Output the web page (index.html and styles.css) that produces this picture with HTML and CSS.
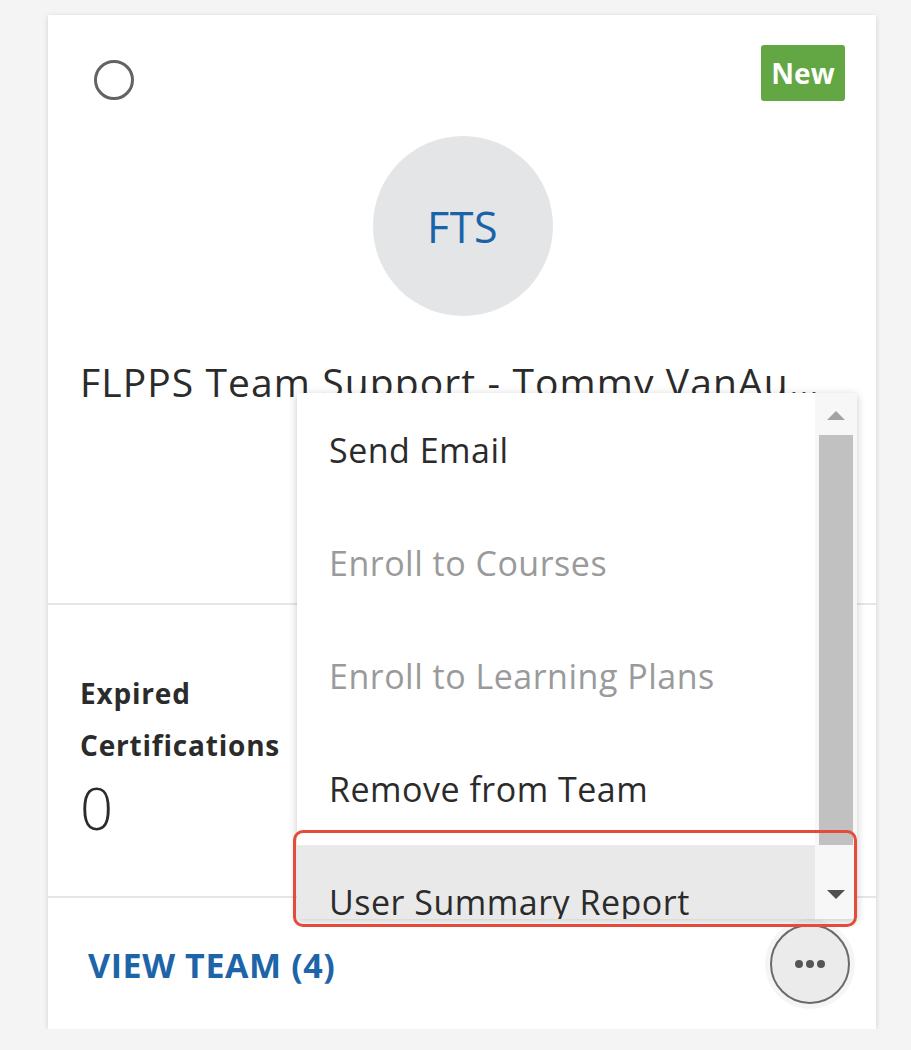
FILE: index.html
```html
<!DOCTYPE html>
<html lang="en">
<head>
<meta charset="utf-8">
<title>Team card</title>
<link rel="stylesheet" href="styles.css">
</head>
<body>
<div class="card">
  <div class="card-top">
    <div class="top-row">
      <span class="select-circle"></span>
      <span class="badge">New</span>
    </div>
    <div class="avatar">FTS</div>
    <div class="title">FLPPS Team Support - Tommy VanAu…</div>
  </div>
  <div class="stats">
    <div class="stat">
      <div class="stat-label">Expired<br>Certifications</div>
      <div class="stat-value">0</div>
    </div>
  </div>
  <div class="footer">
    <a class="view-team">VIEW TEAM (4)</a>
    <button class="more-btn" aria-label="More actions">
      <svg width="30" height="10" viewBox="0 0 30 10"><circle cx="4" cy="5" r="4" fill="#555"/><circle cx="15" cy="5" r="4" fill="#555"/><circle cx="26" cy="5" r="4" fill="#555"/></svg>
    </button>
  </div>

  <div class="menu">
    <ul class="menu-list">
      <li class="menu-item">Send Email</li>
      <li class="menu-item disabled">Enroll to Courses</li>
      <li class="menu-item disabled">Enroll to Learning Plans</li>
      <li class="menu-item">Remove from Team</li>
      <li class="menu-item active">User Summary Report</li>
    </ul>
    <div class="scrollbar">
      <span class="arrow up"></span>
      <span class="thumb"></span>
      <span class="arrow down"></span>
    </div>
  </div>
  <div class="highlight-box"></div>
</div>
</body>
</html>
```

FILE: styles.css
```css
html, body {
  margin: 0;
  padding: 0;
  background: #f4f4f4;
  font-family: "Open Sans", "Noto Sans", sans-serif;
  color: #2b2b2b;
}

.card {
  position: relative;
  margin: 15px 0 0 48px;
  width: 828px;
  height: 1014px;
  background: #fff;
  box-shadow: 0 1px 5px rgba(0, 0, 0, 0.14);
  display: flex;
  flex-direction: column;
}

.card-top {
  height: 590px;
  padding: 30px 31px 0 32px;
  box-sizing: border-box;
  border-bottom: 2px solid #e6e6e6;
}

.top-row {
  display: flex;
  justify-content: space-between;
  align-items: flex-start;
  height: 56px;
}

.select-circle {
  display: block;
  width: 34px;
  height: 34px;
  margin: 15px 0 0 14px;
  border: 3px solid #636363;
  border-radius: 50%;
}

.badge {
  display: flex;
  align-items: center;
  justify-content: center;
  width: 84px;
  height: 56px;
  background: #62a744;
  color: #fff;
  font-weight: 700;
  font-size: 28px;
  border-radius: 3px;
}

.avatar {
  width: 180px;
  height: 180px;
  margin: 35px auto 0;
  border-radius: 50%;
  background: #e4e5e6;
  color: #1b63a9;
  font-size: 43px;
  letter-spacing: 0.5px;
  display: flex;
  align-items: center;
  justify-content: center;
}

.title {
  margin-top: 43px;
  height: 39px;
  overflow: hidden;
  font-size: 39px;
  line-height: 46px;
  letter-spacing: 1.1px;
  white-space: nowrap;
  color: #2b2b2b;
}

.stats {
  height: 293px;
  box-sizing: border-box;
  padding: 62px 0 0 32px;
  border-bottom: 2px solid #e6e6e6;
}

.stat-label {
  font-weight: 700;
  font-size: 28px;
  line-height: 52px;
  letter-spacing: 0.8px;
  color: #2b2b2b;
}

.stat-value {
  margin-top: 5px;
  font-size: 58px;
  font-weight: 300;
  line-height: 64px;
  color: #2b2b2b;
}

.footer {
  flex: 1;
  display: flex;
  align-items: center;
  justify-content: space-between;
  padding: 0 26px 0 40px;
}

.view-team {
  color: #1d64a8;
  font-weight: 700;
  font-size: 34px;
  letter-spacing: 0.6px;
  margin-top: 2px;
}

.more-btn {
  width: 80px;
  height: 80px;
  border-radius: 50%;
  border: 2px solid #6a6a6a;
  background: #ebebeb;
  box-shadow: 0 0 0 5px rgba(0, 0, 0, 0.04);
  display: flex;
  align-items: center;
  justify-content: center;
  padding: 0;
}

.menu {
  position: absolute;
  left: 249px;
  top: 378px;
  width: 560px;
  height: 526px;
  background: #fff;
  box-shadow: 0 2px 8px rgba(0, 0, 0, 0.22);
  display: flex;
  overflow: hidden;
}

.menu-list {
  list-style: none;
  margin: 0;
  padding: 0;
  flex: 1;
}

.menu-item {
  height: 113px;
  display: flex;
  align-items: center;
  padding-left: 32px;
  font-size: 34px;
  letter-spacing: 0.5px;
  color: #2b2b2b;
}

.menu-item.disabled {
  color: #9a9a9a;
}

.menu-item.active {
  background: #e9e9e9;
}

.scrollbar {
  width: 42px;
  background: #f7f7f7;
  display: flex;
  flex-direction: column;
  align-items: center;
}

.arrow {
  width: 0;
  height: 0;
  border-left: 9px solid transparent;
  border-right: 9px solid transparent;
}

.arrow.up {
  margin-top: 18px;
  border-bottom: 9px solid #a3a3a3;
}

.thumb {
  display: block;
  width: 34px;
  height: 410px;
  margin-top: 15px;
  background: #c1c1c1;
}

.arrow.down {
  margin-top: 45px;
  border-top: 9px solid #505050;
}

.highlight-box {
  position: absolute;
  left: 245px;
  top: 815px;
  width: 564px;
  height: 97px;
  box-sizing: border-box;
  border: 3px solid #e34c3b;
  border-radius: 10px;
}
```
